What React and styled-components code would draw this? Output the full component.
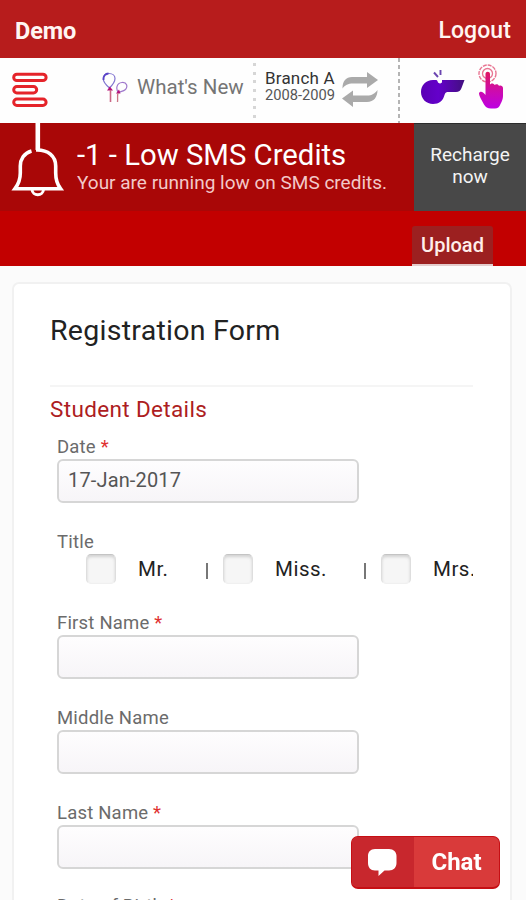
import React from 'react';
import styled, { createGlobalStyle } from 'styled-components';

const GlobalStyle = createGlobalStyle`
  * {
    box-sizing: border-box;
  }
  body {
    margin: 0;
    overflow: hidden;
    font-family: Roboto, sans-serif;
    background-color: #fbfbfb;
  }
`;

const Page = styled.div`
  width: 526px;
  height: 900px;
  overflow: hidden;
  background-color: #fbfbfb;
`;

const Header = styled.header`
  display: flex;
  justify-content: space-between;
  align-items: center;
  height: 58px;
  padding: 3px 15px 0 15px;
  background-color: #b71c1c;
  color: #fff5f2;
`;

const Brand = styled.div`
  font-size: 23.5px;
  font-weight: 700;
  letter-spacing: -0.1px;
`;

const Logout = styled.a`
  font-size: 23px;
  font-weight: 500;
  letter-spacing: 0.1px;
`;

const Toolbar = styled.nav`
  display: flex;
  height: 65px;
  background-color: #fefefe;
`;

const MenuCell = styled.div`
  display: flex;
  align-items: center;
  width: 102px;
  padding: 0 0 1px 12px;
`;

const NewsCell = styled.div`
  display: flex;
  width: 151px;
`;

const NewsText = styled.span`
  margin-left: 9px;
  font-size: 20.5px;
  line-height: 58px;
  letter-spacing: 0;
  white-space: nowrap;
  color: #757575;
`;

const DotLine = styled.div`
  width: 3px;
  background: repeating-linear-gradient(#fefefe 0 5px, #d6d6d6 5px 8px, #fefefe 8px 8.7px);
`;

const DashLine = styled.div`
  width: 2px;
  background: repeating-linear-gradient(#b4b4b4 0 4px, #fefefe 4px 7px);
`;

const BranchCell = styled.div`
  display: flex;
  width: 142px;
  padding: 11px 0 0 9px;
`;

const BranchName = styled.div`
  font-size: 17px;
  line-height: 18px;
  letter-spacing: 0.2px;
  white-space: nowrap;
  color: #333;
`;

const BranchYear = styled.div`
  font-size: 14.7px;
  line-height: 17px;
  white-space: nowrap;
  color: #555;
`;

const SwitchWrap = styled.span`
  margin: 2px 0 0 7px;
`;

const ToolCell = styled.div`
  display: flex;
  padding-left: 20px;
`;

const TouchWrap = styled.span`
  margin-left: 12px;
`;

const Alert = styled.div`
  display: flex;
  height: 88px;
  background-color: #a90707;
`;

const AlertBody = styled.div`
  display: flex;
  width: 414px;
`;

const AlertText = styled.div`
  padding: 15px 0 0 11px;
  white-space: nowrap;
`;

const AlertTitle = styled.div`
  font-size: 29.3px;
  line-height: 34px;
  color: #fff;
`;

const AlertNote = styled.div`
  font-size: 19px;
  line-height: 21px;
  color: #f3c9c9;
`;

const Recharge = styled.button`
  width: 112px;
  padding: 0 0 4px;
  border: 0;
  border-top: 1px solid #2c2c2c;
  background-color: #484848;
  color: #f4f4f4;
  font-family: inherit;
  font-size: 19px;
  line-height: 22px;
`;

const TabBar = styled.div`
  display: flex;
  align-items: flex-end;
  height: 55px;
  padding-left: 412px;
  background-color: #c20000;
`;

const Tab = styled.div`
  width: 81px;
  height: 40px;
  border-bottom: 2px solid #e3cccc;
  border-radius: 3px 3px 0 0;
  background-color: #9c2020;
  color: #ffeeea;
  font-size: 20px;
  font-weight: 500;
  line-height: 38px;
  text-align: center;
`;

const Card = styled.main`
  width: 500px;
  height: 700px;
  margin: 16px 0 0 12px;
  padding: 32px 37px 0 36px;
  border: 2px solid #f1f1f1;
  border-radius: 7px;
  background-color: #fff;
`;

const FormTitle = styled.h1`
  height: 69px;
  margin: 0;
  font-size: 28.5px;
  font-weight: 400;
  line-height: 29px;
  letter-spacing: 0.27px;
  color: #222;
`;

const SectionTitle = styled.h2`
  width: 423px;
  height: 50px;
  margin: 0;
  border-top: 2px solid #f5f5f5;
  font-size: 22.5px;
  font-weight: 400;
  line-height: 44px;
  letter-spacing: 0.35px;
  color: #ad1d22;
`;

const Field = styled.div`
  height: ${(props) => props.$height || 95}px;
  padding-left: 7px;
`;

const Label = styled.label`
  display: block;
  height: 24px;
  font-size: 18.5px;
  line-height: 24px;
  letter-spacing: 0.2px;
  white-space: nowrap;
  color: #6b6b6b;
`;

const Star = styled.span`
  color: #e03030;
`;

const Input = styled.input`
  display: block;
  width: 302px;
  height: 44px;
  padding: 0 9px 2px;
  border: 2px solid #d6d6d6;
  border-radius: 6px;
  background: linear-gradient(#fefdfe, #f7f5f8);
  color: #555;
  font-family: inherit;
  font-size: 20px;
  letter-spacing: 0.15px;
  outline: none;
`;

const Options = styled.div`
  display: flex;
  align-items: center;
  width: 416px;
  height: 30px;
  padding-left: 29px;
  overflow: hidden;
`;

const Check = styled.span`
  flex: none;
  width: 30px;
  height: 30px;
  border: 1px solid #dedede;
  border-top-color: #c4c4c4;
  border-bottom-color: #f0f0f0;
  border-radius: 5px;
  background-color: #f6f6f6;
  box-shadow: inset 0 2px 3px #d2d2d2;
`;

const OptionText = styled.span`
  flex: none;
  width: ${(props) => props.$width}px;
  padding-left: 22px;
  font-size: 20.5px;
  letter-spacing: 0.5px;
  color: #222;
`;

const Bar = styled.span`
  flex: none;
  width: 2px;
  height: 16px;
  margin: 3px 15px 0 0;
  background-color: #777;
`;

const Chat = styled.button`
  position: fixed;
  left: 351px;
  top: 836px;
  display: flex;
  width: 149px;
  height: 53px;
  padding: 0;
  overflow: hidden;
  border: 1px solid #c60f14;
  border-bottom-width: 2px;
  border-radius: 7px;
  background-color: #d93a3a;
  color: #fff;
  font-family: inherit;
`;

const ChatIcon = styled.span`
  display: flex;
  width: 62px;
  height: 100%;
  background-color: #c8272d;
`;

const ChatText = styled.span`
  flex: 1;
  font-size: 24px;
  font-weight: 700;
  line-height: 50px;
`;

function MenuIcon() {
  return (
    <svg width="36" height="36" viewBox="0 0 36 36" fill="#fff" stroke="#e5242a" strokeWidth="3">
      <rect x="1.7" y="2.2" width="32.4" height="6.4" rx="3.2" />
      <rect x="1.7" y="14.6" width="23" height="6.4" rx="3.2" />
      <rect x="1.7" y="27" width="32.4" height="6.4" rx="3.2" />
    </svg>
  );
}

function BalloonIcon() {
  return (
    <svg width="26" height="65" viewBox="0 0 26 65" fill="none">
      <path d="M7.5 30C4 27 1.200 23.500 1.200 20.5C1.200 17.500 3.500 15.500 7 15.500C10.500 15.500 13 17.500 13 20.500C13 24 10.500 27 7.500 30Z" stroke="#8175d0" strokeWidth="1.200" />
      <path d="M1.500 22C1.200 18 3.500 15.600 6.500 15.500" stroke="#5a44c8" strokeWidth="1.800" />
      <path d="M16.500 34.500C13.500 31 14.500 25 20 24.500C25 24 26 28.500 23.500 31.500C21.500 33.500 18.500 33.500 16.500 34.500Z" stroke="#9f78cc" strokeWidth="1.200" />
      <path d="M7.800 28.500L5 32.500H11Z" fill="#b5127c" />
      <path d="M17 31.500L14 35.500H18.500Z" fill="#b5127c" />
      <path d="M8.500 32V44" stroke="#cb6685" strokeWidth="1.600" />
      <path d="M16 35C15 38 16 41 15.500 44" stroke="#cb7685" strokeWidth="1.300" />
    </svg>
  );
}

function SwitchIcon() {
  return (
    <svg width="36" height="36" viewBox="0 0 36 36" fill="#aaa">
      <path d="M0.500 17.500C0.500 10 4 6 10 6H25V1L36 9L25 17V12.500H11C6 12.500 3 14 0.500 17.500Z" />
      <path d="M35.500 19C35.500 26 32 31 25 31H11V36L0 27.500L11 19.500V24.500H25C30 24.500 33 22.500 35.500 19Z" />
    </svg>
  );
}

function WhistleIcon() {
  return (
    <svg width="46" height="65" viewBox="0 0 46 65">
      <defs>
        <linearGradient id="whistle" x1="0" y1="0" x2="1" y2="0">
          <stop offset="0" stopColor="#5a00b4" />
          <stop offset="0.4" stopColor="#6400ca" />
          <stop offset="1" stopColor="#42107f" />
        </linearGradient>
      </defs>
      <path d="M13 22C6 22 1 27 1 34C1 41 6.500 46 13 46C19 46 23 43 24.500 37C25 34.500 26.500 34 29 34H36C39 34 40.500 32.500 41.500 30L44.500 22H22V24C22 26 17.500 26 17.500 23L16.500 22Z" fill="url(#whistle)" />
      <path d="M14 14.500L18 19M20.500 12V17" stroke="#6b45b0" strokeWidth="1.900" />
    </svg>
  );
}

function TouchIcon() {
  return (
    <svg width="28" height="65" viewBox="0 0 28 65" fill="none">
      <defs>
        <linearGradient id="touch" x1="0" y1="0" x2="0" y2="1">
          <stop offset="0" stopColor="#e0175f" />
          <stop offset="0.55" stopColor="#cc0bb0" />
          <stop offset="1" stopColor="#bd00e2" />
        </linearGradient>
      </defs>
      <circle cx="9.500" cy="15.500" r="8.500" stroke="#e87592" strokeWidth="1.400" strokeDasharray="4 1" />
      <circle cx="9.500" cy="15.500" r="5" stroke="#e87592" strokeWidth="1.300" />
      <path d="M7.500 16C7.500 13 12 13 12 16V27C12 25 16 25 16.500 27C18 25.500 20.500 26 21 28C22.500 27 25 28 25 30V38C25 41 24 43 22.500 46C21.500 49 19.500 50.500 17 50.500H13C9.500 50.500 7.500 49 6 46.500L3 41C1.500 38 1 36.500 1 35C2.500 32.500 5.500 34 7.500 37Z" fill="url(#touch)" />
    </svg>
  );
}

function BellIcon() {
  return (
    <svg width="66" height="88" viewBox="0 0 66 88" fill="none" stroke="#fff">
      <path d="M37.800 0V27" strokeWidth="4.600" />
      <path d="M31.500 28C24 30 20.300 36.500 20.300 43V50C20.300 57 18.500 61 15 65.700H60.500C57 61 55.700 57 55.700 50V43C55.700 33 48 26.500 36 27" strokeWidth="3.600" />
      <path d="M32 66.500C32.500 73.500 43 73.500 43.500 66.500" strokeWidth="3" />
    </svg>
  );
}

function BubbleIcon() {
  return (
    <svg width="62" height="51" viewBox="0 0 62 51" fill="#fff">
      <path d="M23 12H37C41.500 12 44.500 15 44.500 19V26C44.500 30.500 41.500 33.500 37 33.500H32.500L26.500 39V33.500H23C18.500 33.500 16 30.500 16 26V19C16 15 18.500 12 23 12Z" />
    </svg>
  );
}

function TextField({ label, required, value, height }) {
  return (
    <Field $height={height}>
      <Label>
        {label} {required && <Star>*</Star>}
      </Label>
      <Input defaultValue={value} />
    </Field>
  );
}

function App() {
  return (
    <Page>
      <GlobalStyle />
      <Header>
        <Brand>Demo</Brand>
        <Logout>Logout</Logout>
      </Header>
      <Toolbar>
        <MenuCell>
          <MenuIcon />
        </MenuCell>
        <NewsCell>
          <BalloonIcon />
          <NewsText>What&apos;s New</NewsText>
        </NewsCell>
        <DotLine />
        <BranchCell>
          <div>
            <BranchName>Branch A</BranchName>
            <BranchYear>2008-2009</BranchYear>
          </div>
          <SwitchWrap>
            <SwitchIcon />
          </SwitchWrap>
        </BranchCell>
        <DashLine />
        <ToolCell>
          <WhistleIcon />
          <TouchWrap>
            <TouchIcon />
          </TouchWrap>
        </ToolCell>
      </Toolbar>
      <Alert>
        <AlertBody>
          <BellIcon />
          <AlertText>
            <AlertTitle>-1 - Low SMS Credits</AlertTitle>
            <AlertNote>Your are running low on SMS credits.</AlertNote>
          </AlertText>
        </AlertBody>
        <Recharge>
          Recharge
          <br />
          now
        </Recharge>
      </Alert>
      <TabBar>
        <Tab>Upload</Tab>
      </TabBar>
      <Card>
        <FormTitle>Registration Form</FormTitle>
        <SectionTitle>Student Details</SectionTitle>
        <TextField label="Date" required value="17-Jan-2017" />
        <Field $height={81}>
          <Label>Title</Label>
          <Options>
            <Check />
            <OptionText $width={90}>Mr.</OptionText>
            <Bar />
            <Check />
            <OptionText $width={111}>Miss.</OptionText>
            <Bar />
            <Check />
            <OptionText $width={70}>Mrs.</OptionText>
          </Options>
        </Field>
        <TextField label="First Name" required />
        <TextField label="Middle Name" />
        <TextField label="Last Name" required height={93} />
        <TextField label="Date of Birth" required />
      </Card>
      <Chat>
        <ChatIcon>
          <BubbleIcon />
        </ChatIcon>
        <ChatText>Chat</ChatText>
      </Chat>
    </Page>
  );
}

export default App;
